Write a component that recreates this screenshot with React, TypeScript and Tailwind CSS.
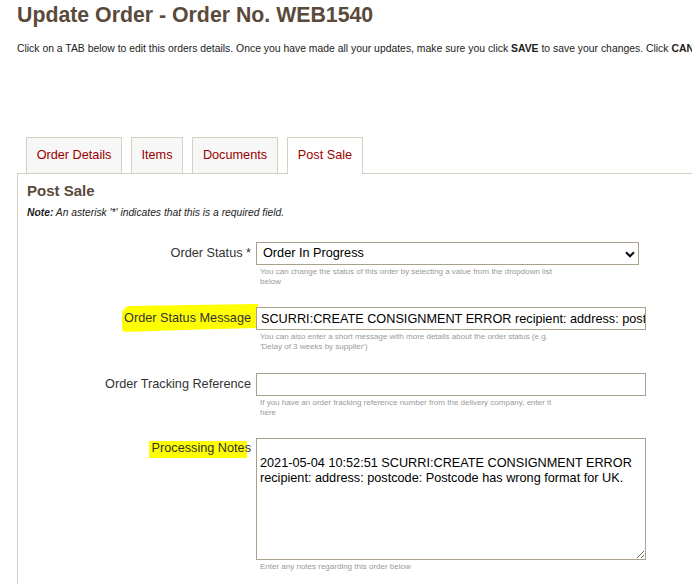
import React from "react";

const tabs = [
  { label: "Order Details", w: "w-[96px]" },
  { label: "Items", w: "w-[52px]" },
  { label: "Documents", w: "w-[86px]" },
  { label: "Post Sale", w: "w-[76px]", active: true },
];

const Help = ({ children }: { children: React.ReactNode }) => (
  <p className="mt-[2px] pl-[4px] w-[304px] text-[8px] leading-[10px] text-[#999]">{children}</p>
);

const Label = ({ children }: { children: React.ReactNode }) => (
  <div className="relative w-[224px] h-[23px] shrink-0 flex items-center justify-end text-[12.7px] text-[#333]">
    {children}
  </div>
);

export default function App() {
  return (
    <div className="w-[692px] h-[584px] overflow-hidden bg-white font-['Liberation_Sans',Arial,sans-serif]">
      <h1 className="pl-[17px] pt-[3px] text-[21.3px] leading-[24px] font-bold text-[#594a3b] whitespace-nowrap">
        Update Order - Order No. WEB1540
      </h1>
      <p className="mt-[16px] pl-[17px] text-[10.4px] leading-[12px] text-[#222] whitespace-nowrap">
        Click on a TAB below to edit this orders details. Once you have made all your updates, make sure you click{" "}
        <b>SAVE</b> to save your changes. Click <b>CANCEL</b> to discard your changes.
      </p>

      <div className="ml-[17px] mt-[82px] w-[700px]">
        {/* tab strip */}
        <div className="flex gap-[9px] ml-[9px] h-[36px] items-start">
          {tabs.map((t) => (
            <div
              key={t.label}
              className={`${t.w} flex items-center justify-center border border-b-0 border-[#d4d0c2] text-[12.7px] text-[#990000] ${
                t.active ? "relative z-10 h-[37px] bg-white" : "h-[36px] bg-[#f7f7f7]"
              }`}
            >
              {t.label}
            </div>
          ))}
        </div>

        {/* panel */}
        <div className="border-l border-t border-[#d4d0c2] h-[420px] pl-[9px] pt-[8px]">
          <h2 className="text-[15px] leading-[18px] font-bold text-[#594a3b]">Post Sale</h2>
          <p className="mt-[7px] text-[10.3px] leading-[12px] italic text-[#222]">
            <b>Note:</b> An asterisk '*' indicates that this is a required field.
          </p>

          <div className="mt-[23px] flex flex-col gap-[21px]">
            {/* order status */}
            <div className="flex gap-[5px]">
              <Label>Order Status&nbsp;*</Label>
              <div>
                <div className="relative w-[383px]">
                  <select
                    defaultValue="progress"
                    className="block appearance-none w-full h-[23px] border border-[#a9a18c] bg-white pl-[6px] text-[12.7px] text-black outline-none"
                  >
                    <option value="progress">Order In Progress</option>
                    <option value="dispatched">Dispatched</option>
                    <option value="complete">Complete</option>
                  </select>
                  <svg
                    className="absolute right-[4px] top-[9px] pointer-events-none"
                    width="10"
                    height="7"
                    viewBox="0 0 10 7"
                  >
                    <path d="M1 1.2 L5 5.2 L9 1.2" fill="none" stroke="#111" strokeWidth="2.2" />
                  </svg>
                </div>
                <Help>You can change the status of this order by selecting a value from the dropdown list below</Help>
              </div>
            </div>

            {/* status message */}
            <div className="flex gap-[5px] -mt-[1px]">
              <Label>
                <svg className="absolute left-[95px] top-[-3px]" width="136" height="29" viewBox="0 0 136 29">
                  <path d="M0 9 Q1 3 8 2 L136 0 L136 24 L60 26 L4 28 Q0 28 0 24 Z" fill="#ffff00" />
                </svg>
                <span className="relative">Order Status Message</span>
              </Label>
              <div>
                <input
                  defaultValue="SCURRI:CREATE CONSIGNMENT ERROR recipient: address: postcode: Postcode has wrong format for UK."
                  className="block relative w-[390px] h-[23px] border border-[#a9a18c] bg-white pl-[4px] text-[12.7px] text-black outline-none"
                />
                <Help>You can also enter a short message with more details about the order status (e.g. 'Delay of 3 weeks by supplier')</Help>
              </div>
            </div>

            {/* tracking reference */}
            <div className="flex gap-[5px]">
              <Label>Order Tracking Reference</Label>
              <div>
                <input className="block w-[390px] h-[23px] border border-[#a9a18c] bg-white pl-[4px] text-[12.7px] outline-none" />
                <Help>If you have an order tracking reference number from the delivery company, enter it here</Help>
              </div>
            </div>

            {/* processing notes */}
            <div className="flex gap-[5px] -mt-[1px]">
              <div className="relative w-[224px] h-[22px] shrink-0 flex items-center justify-end text-[12.7px] text-[#333]">
                <span className="absolute left-[122px] top-[3px] w-[98px] h-[17px] bg-[#ffff00]" />
                <span className="relative">Processing Notes</span>
              </div>
              <div>
                <textarea
                  defaultValue={"\n2021-05-04 10:52:51 SCURRI:CREATE CONSIGNMENT ERROR recipient: address: postcode: Postcode has wrong format for UK."}
                  className="block w-[390px] h-[122px] border border-[#a9a18c] bg-white px-[3px] pt-[2px] text-[12.7px] leading-[15px] text-black outline-none"
                />
                <Help>Enter any notes regarding this order below</Help>
              </div>
            </div>
          </div>
        </div>
      </div>
    </div>
  );
}
